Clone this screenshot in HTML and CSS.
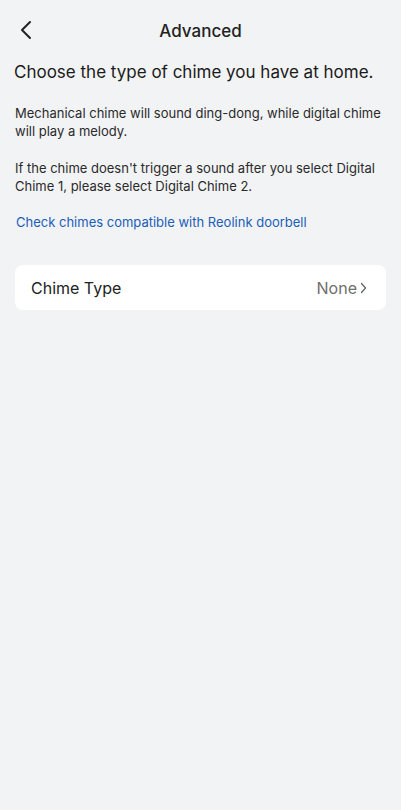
FILE: index.html
```html
<!DOCTYPE html>
<html lang="en">
<head>
    <meta charset="UTF-8">
    <meta name="viewport" content="width=device-width, initial-scale=1.0">
    <title>Advanced</title>
    <link rel="stylesheet" href="styles.css">
</head>
<body>

<div class="page">
    <!-- Header -->
    <div class="header">
        <a href="#" class="back">
            <svg width="14" height="20" viewBox="0 0 14 20"><path d="M11 2 L3 10 L11 18" fill="none" stroke="#222" stroke-width="2" stroke-linecap="round" stroke-linejoin="round"/></svg>
        </a>
        <h1>Advanced</h1>
    </div>

    <h2>Choose the type of chime you have at home.</h2>

    <p class="desc">Mechanical chime will sound ding-dong, while digital chime will play a melody.</p>
    <p class="desc">If the chime doesn't trigger a sound after you select Digital Chime 1, please select Digital Chime 2.</p>

    <a href="#" class="link">Check chimes compatible with Reolink doorbell</a>

    <!-- Chime Type -->
    <div class="card">
        <span class="label">Chime Type</span>
        <span class="value">None
            <svg width="7" height="12" viewBox="0 0 7 12"><path d="M1.5 1.5 L5.5 6 L1.5 10.5" fill="none" stroke="#666" stroke-width="1.3" stroke-linecap="round" stroke-linejoin="round"/></svg>
        </span>
    </div>
</div>

</body>
</html>
```

FILE: styles.css
```css
body {
    font-family: 'Inter', 'Liberation Sans', sans-serif;
    margin: 0;
    padding: 0;
    background: #f2f3f5;
    color: #222;
}
.page {
    padding: 0 15px;
}
.header {
    position: relative;
    height: 62px;
    display: flex;
    align-items: center;
    justify-content: center;
}
.header h1 {
    font-size: 17px;
    font-weight: 500;
    margin: 0;
    color: #222;
}
.back {
    position: absolute;
    left: 4px;
    top: 20px;
    display: flex;
}
h2 {
    font-size: 17px;
    font-weight: 400;
    margin: 0 0 22px -1px;
    color: #1a1a1a;
    white-space: nowrap;
}
.desc {
    font-size: 13px;
    line-height: 18px;
    margin: 0 0 19px;
    color: #2a2a2a;
}
.link {
    display: block;
    font-size: 13px;
    line-height: 18px;
    color: #1b5eb8;
    text-decoration: none;
    margin: -1px 0 0 1px;
}
.card {
    background: #fff;
    border-radius: 8px;
    height: 45px;
    margin-top: 34px;
    padding: 0 19px 0 16px;
    display: flex;
    align-items: center;
    justify-content: space-between;
}
.label {
    font-size: 16px;
    color: #222;
}
.value {
    font-size: 16px;
    color: #6e6e6e;
    display: flex;
    align-items: center;
    gap: 3px;
}
```
